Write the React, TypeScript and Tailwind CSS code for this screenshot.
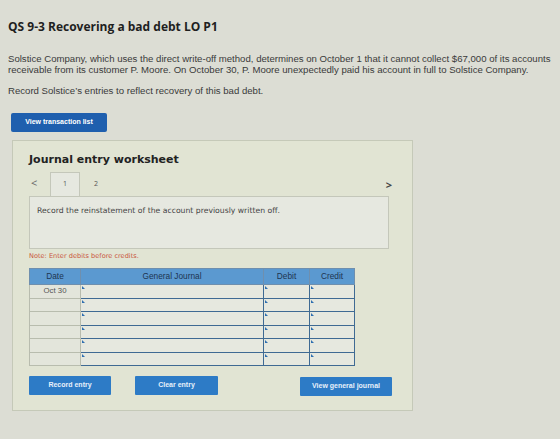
import React from "react";

const rows = ["Oct 30", "", "", "", "", ""];

function InputCell() {
  return (
    <td className="relative border-[1.5px] border-[#3f6a93] bg-[#e6e8df] p-0">
      <span className="absolute left-[1px] top-[1px] h-0 w-0 border-l-[3px] border-t-[3px] border-l-[#2f6fb0] border-t-transparent" />
    </td>
  );
}

const btn =
  "h-[19px] rounded-[1px] bg-[#2d7bc6] text-[7px] font-bold text-[#e8f0fa]";

export default function App() {
  return (
    <div
      className="h-[439px] w-[560px] overflow-hidden bg-[#dcddd4] text-[#333]"
      style={{ fontFamily: "'Open Sans', sans-serif" }}
    >
      <div className="px-[8px] pt-[20px]">
        <h1 className="text-[12px] font-bold leading-[14px] text-[#1f1f1f]">
          QS 9-3 Recovering a bad debt LO P1
        </h1>
        <div
          className="mt-[19px] text-[9.6px] leading-[11.2px] text-[#3a3a3a]"
          style={{ fontFamily: "'Liberation Sans', sans-serif" }}
        >
          <p className="whitespace-nowrap">
            Solstice Company, which uses the direct write-off method, determines on October 1 that it cannot collect $67,000 of its accounts
            <br />
            receivable from its customer P. Moore. On October 30, P. Moore unexpectedly paid his account in full to Solstice Company.
          </p>
          <p className="mt-[10px]">Record Solstice’s entries to reflect recovery of this bad debt.</p>
        </div>

        <button
          className="ml-[3px] mt-[16px] flex h-[19px] w-[96px] items-center justify-center rounded-[2px] bg-[#1f5fae] text-[7px] font-bold text-white"
          style={{ fontFamily: "'Liberation Sans', sans-serif" }}
        >
          View transaction list
        </button>

        <div className="ml-[4px] mt-[8px] h-[271px] w-[401px] border border-[#c5c9b8] bg-[#e1e4d3] px-[16px] pt-[11px]">
          <h2 className="text-[11px] font-bold text-[#222]" style={{ fontFamily: "'DejaVu Sans', sans-serif" }}>
            Journal entry worksheet
          </h2>

          <div className="mt-[4px] flex items-end">
            <span className="mb-[5px] ml-[2px] w-[19px] text-[11px] text-[#666]">&lt;</span>
            <div className="flex h-[24px] w-[30px] items-center justify-center border border-b-0 border-[#c4c7ba] bg-[#e6e8e0] text-[7px] text-[#555]">
              1
            </div>
            <div className="flex h-[24px] w-[32px] items-center justify-center text-[7px] text-[#555]">2</div>
            <div className="flex-1" />
            <span className="mb-[3px] mr-[4px] text-[11px] font-bold text-[#444]">&gt;</span>
          </div>

          <div
            className="h-[53px] w-[360px] border border-[#c4c7ba] bg-[#e6e8e0] px-[7px] pt-[8px] text-[7.7px] text-[#444]"
            style={{ fontFamily: "'DejaVu Sans', sans-serif" }}
          >
            Record the reinstatement of the account previously written off.
          </div>

          <p className="mt-[3px] text-[6.6px] text-[#c9553d]" style={{ fontFamily: "'DejaVu Sans', sans-serif" }}>
            Note: Enter debits before credits.
          </p>

          <table
            className="mt-[6px] w-[325px] table-fixed border-collapse"
            style={{ fontFamily: "'Liberation Sans', sans-serif" }}
          >
            <thead>
              <tr className="h-[16px] bg-[#5b99d0] text-[8.3px] text-[#1d3550]">
                <th className="w-[51px] border border-[#6f8fae] font-normal">Date</th>
                <th className="w-[183px] border border-[#6f8fae] font-normal">General Journal</th>
                <th className="w-[46px] border border-[#6f8fae] font-normal">Debit</th>
                <th className="w-[45px] border border-[#6f8fae] font-normal">Credit</th>
              </tr>
            </thead>
            <tbody>
              {rows.map((d, i) => (
                <tr key={i} className="h-[13.5px]">
                  <td className="border border-[#b8bcae] bg-[#e3e5db] text-center text-[7.8px] text-[#555]">{d}</td>
                  <InputCell />
                  <InputCell />
                  <InputCell />
                </tr>
              ))}
            </tbody>
          </table>

          <div className="mt-[9px] flex items-center" style={{ fontFamily: "'Liberation Sans', sans-serif" }}>
            <button className={`${btn} w-[82px]`}>Record entry</button>
            <button className={`${btn} ml-[24px] w-[83px]`}>Clear entry</button>
            <button className={`${btn} ml-[82px] mt-[2px] w-[92px]`}>View general journal</button>
          </div>
        </div>
      </div>
    </div>
  );
}
